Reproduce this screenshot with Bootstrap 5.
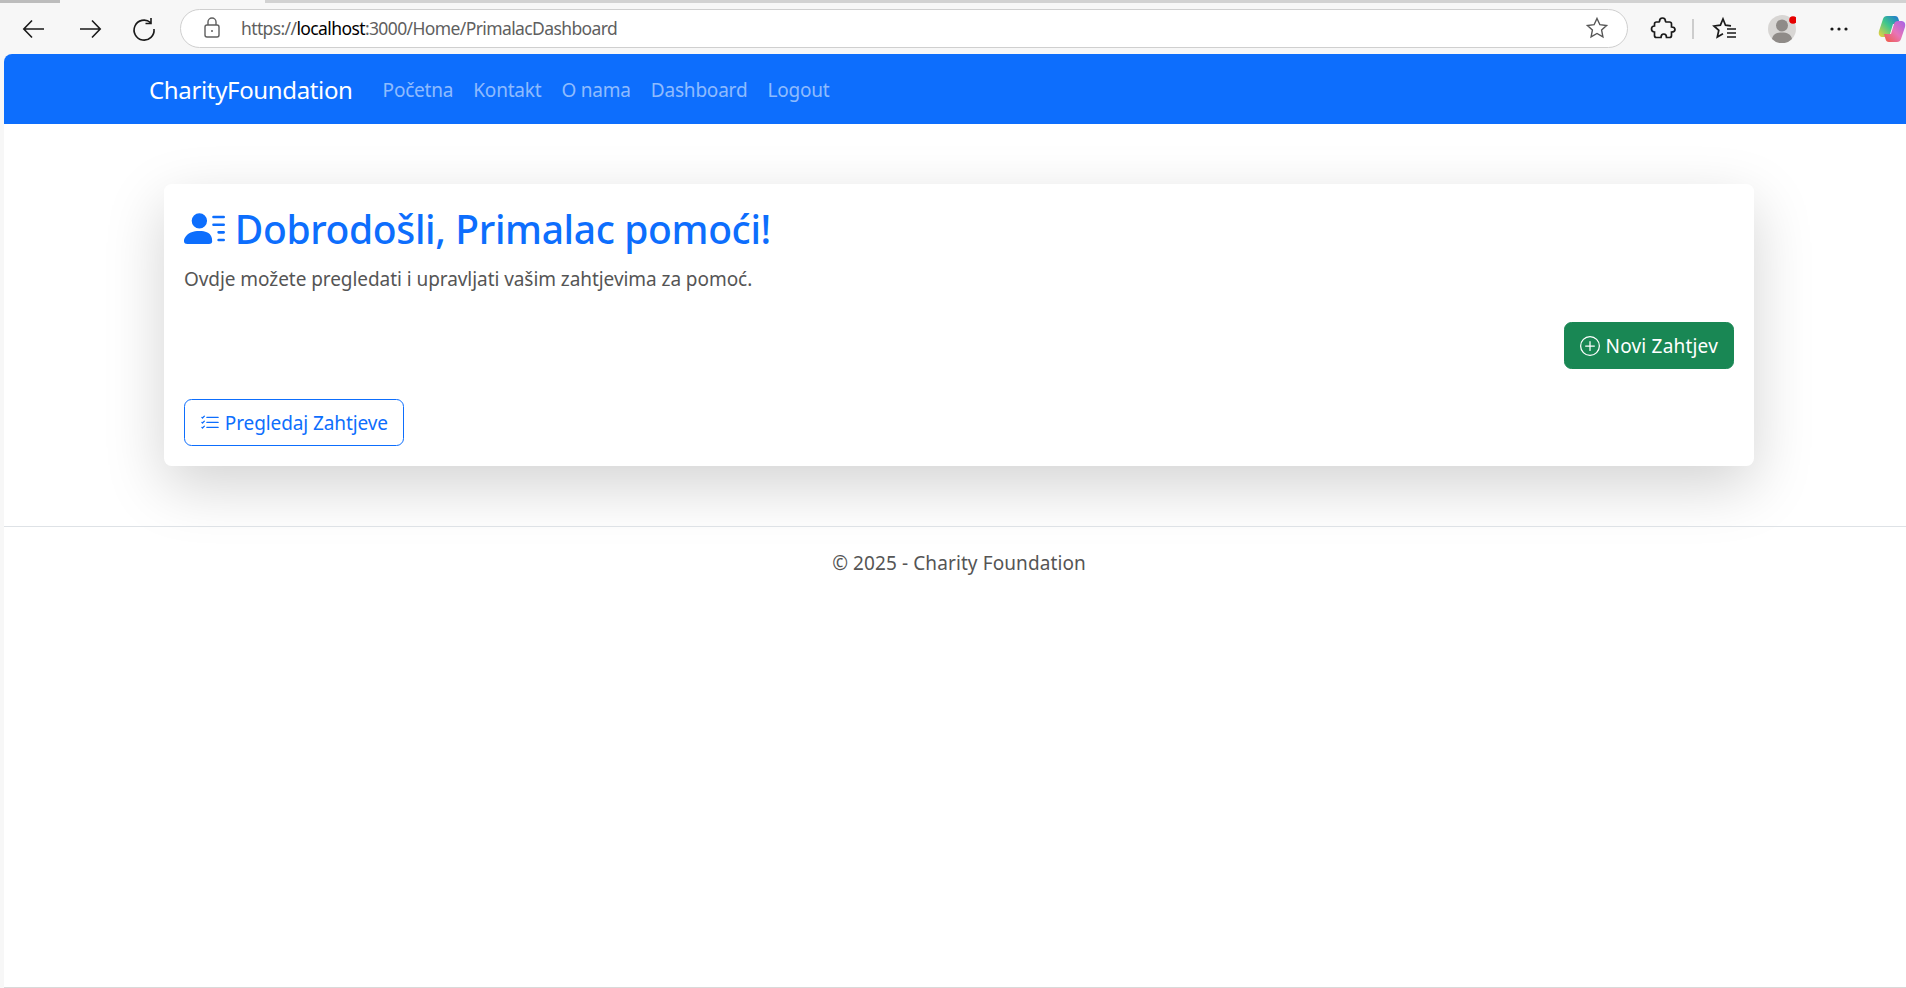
<!DOCTYPE html>
<html lang="bs">
<head>
<meta charset="utf-8">
<title>CharityFoundation</title>
<link href="https://cdn.jsdelivr.net/npm/bootstrap@5.3.0/dist/css/bootstrap.min.css" rel="stylesheet">
<style>
html{font-size:20px}
html,body{height:988px;overflow:hidden}
body{font-family:"Noto Sans","Open Sans",sans-serif;background:#f7f7f7;color:#212529;font-size:19px;letter-spacing:-.06px}
.tabstrip{height:3px;background:#d2d2d2}
.tabstrip .seg1{width:60px;background:#bdbdbd}
.tabstrip .seg2{width:205px;background:#f7f7f7}
.chromebar{height:51px;position:relative}
.tool{width:26px;height:26px;flex:none;color:#1a1a1a}
.t-back{margin-left:21px}
.t-fwd{margin-left:30px}
.t-rel{margin-left:28px}
.addr{margin-left:23px;margin-top:-1px;width:1448px;height:39px;background:#fff;border:1.5px solid #cfcfcf;border-radius:20px;font-size:17.5px;letter-spacing:-.61px;color:#5f5f5f;padding:0 18px 0 22px}
.addr b{font-weight:400;color:#000}
.t-ext{margin-left:22px}
.sep{width:1.5px;height:20px;background:#cdcdcd;margin:0 18px 0 16px}
.avatar{width:28px;height:28px;margin-left:30px;position:relative;flex:none}
.dots{margin-left:30px}
.copilot{margin-left:26px;flex:none;width:28px;height:28px}
.frame{margin-left:4px;width:1902px;height:934px;background:#fff;border-top-left-radius:8px;border-bottom:1px solid #d9d9d9;overflow:hidden}
.frame .navbar{height:70px;padding:0}
.wide{width:1650px;margin-left:130px;max-width:none}
.navbar-brand{font-size:24px;letter-spacing:-.35px;padding:1px 0 0;margin-right:20px}
.nav-link{color:rgba(255,255,255,.55)!important;letter-spacing:-.2px;padding-top:11px;padding-bottom:9px}
.panel{margin:60px 15px;padding:20px;background:#fff;border-radius:7.5px;box-shadow:0 20px 60px rgba(0,0,0,.175)}
.panel h1{font-size:39px;line-height:50px;margin:0 0 9px;font-weight:500;color:#0d6efd;letter-spacing:-.36px}
.panel h1 .ico{width:41px;height:41px;vertical-align:-5px}
.panel p{margin:0 0 29px;color:#555;line-height:30px;padding-top:1px;height:30px}
.ico{width:20px;height:20px;vertical-align:-3px;fill:currentColor}
.btn{font-size:19px;line-height:30px;border-width:1px}
.btn-success{letter-spacing:.2px}
.btn-outline-primary{letter-spacing:-.1px}
.actions-top{margin-bottom:30px}
.foot{border-top:1px solid #dee2e6;color:#555;padding:21px 0 19px;line-height:30px}
.foot-inner{width:1650px;margin-left:130px;letter-spacing:.1px}
</style>
</head>
<body>
<div class="tabstrip d-flex"><div class="seg1"></div><div class="seg2"></div></div>
<div class="chromebar d-flex align-items-center">
  <svg class="tool t-back" viewBox="0 0 26 26" fill="none" stroke="currentColor" stroke-width="1.6" aria-hidden="true"><path d="M23 13H3M11 4.500L2.800 13l8.200 8.500"/></svg>
  <svg class="tool t-fwd" viewBox="0 0 26 26" fill="none" stroke="currentColor" stroke-width="1.6" aria-hidden="true"><path d="M3 13h20M15 4.500l8.200 8.500-8.200 8.500"/></svg>
  <svg class="tool t-rel" viewBox="0 0 26 26" fill="none" stroke="currentColor" stroke-width="1.6" aria-hidden="true"><path d="M19.500 6.500A10 10 0 1 0 23 13M20 2v5.500h-5.500"/></svg>
  <div class="addr d-flex align-items-center">
    <svg width="18" height="22" viewBox="0 0 18 22" fill="none" stroke="#5f5f5f" stroke-width="1.4" class="me-3 flex-none" aria-hidden="true"><rect x="2" y="8" width="14" height="12" rx="2"/><path d="M5 8V5a4 4 0 0 1 8 0v3"/><circle cx="9" cy="14" r="1" fill="#5f5f5f" stroke="none"/></svg>
    <span class="flex-grow-1">https://<b>localhost</b>:3000/Home/PrimalacDashboard</span>
    <svg width="24" height="24" viewBox="0 0 24 24" fill="none" stroke="#555" stroke-width="1.4" aria-hidden="true"><path d="M12 2.500l2.900 6.200 6.700.8-5 4.600 1.300 6.700-5.900-3.300-5.900 3.300 1.300-6.700-5-4.600 6.700-.8z"/></svg>
  </div>
  <svg class="tool t-ext" viewBox="0 0 26 26" fill="none" stroke="currentColor" stroke-width="1.7" aria-hidden="true"><path d="M9.500 5.500C9.500 3 11 2 12.500 2s3 1 3 3.500c0 .7 2.500.5 4 .5 1.500 0 2 1 2 2v3c2.500 0 3.500 1 3.500 2.500S24 16 21.500 16v3.500c0 1.500-1 2-2 2h-3c0-2.500-1.200-3.500-2.700-3.500S11 19 11 21.500H6.500c-1.500 0-2-1-2-2V16C2.500 16 1.500 14.700 1.500 13S2.500 10 4.500 10V8c0-1.500 1-2 2-2 1 0 3 .2 3-.5z"/></svg>
  <div class="sep"></div>
  <svg class="tool" viewBox="0 0 26 26" fill="none" stroke="currentColor" stroke-width="1.7" aria-hidden="true"><path d="M19 9.800l-5.500-.6L11 3 8.400 9.200 2 10l4.800 4.300L5.300 21l5.700-3.200M15 13h9M15 17h9M15 21h9"/></svg>
  <svg class="avatar" viewBox="0 0 28 28" aria-hidden="true"><circle cx="14" cy="14" r="14" fill="#d8d6d4"/><circle cx="14" cy="10.500" r="6" fill="#8f8b88"/><path d="M4 24c1-5 5-6.500 10-6.500S23 19 24 24a14 14 0 0 1-20 0z" fill="#8f8b88"/><circle cx="25" cy="5" r="3.800" fill="#e60000"/></svg>
  <svg class="tool dots" viewBox="0 0 26 26" fill="currentColor" aria-hidden="true"><circle cx="6" cy="13" r="1.600"/><circle cx="13" cy="13" r="1.600"/><circle cx="20" cy="13" r="1.600"/></svg>
  <svg class="copilot" viewBox="0 0 28 28" aria-hidden="true"><defs><linearGradient id="cg1" x1="0" y1="1" x2="1" y2="0"><stop offset="0" stop-color="#f4d13c"/><stop offset=".5" stop-color="#3fc78c"/><stop offset="1" stop-color="#1b6fd8"/></linearGradient><linearGradient id="cg2" x1="0" y1="1" x2="1" y2="0"><stop offset="0" stop-color="#f0593e"/><stop offset=".5" stop-color="#e874b8"/><stop offset="1" stop-color="#a463e8"/></linearGradient></defs><path d="M9 1h8c2 0 3 1 3.500 3L22 9h-7L12 19c-.5 2-2 3-4 3H5c-3 0-5-2-4-6L5 4c.6-2 2-3 4-3z" fill="url(#cg1)"/><path d="M19 27h-8c-2 0-3-1-3.500-3L6 19h7l3-10c.5-2 2-3 4-3h3c3 0 5 2 4 6l-4 12c-.6 2-2 3-4 3z" fill="url(#cg2)"/></svg>
</div>
<div class="frame">
  <nav class="navbar navbar-expand navbar-dark bg-primary">
    <div class="wide container-fluid">
      <a class="navbar-brand" href="#">CharityFoundation</a>
      <ul class="navbar-nav me-auto">
        <li class="nav-item"><a class="nav-link" href="#">Početna</a></li>
        <li class="nav-item"><a class="nav-link" href="#">Kontakt</a></li>
        <li class="nav-item"><a class="nav-link" href="#">O nama</a></li>
        <li class="nav-item"><a class="nav-link" href="#">Dashboard</a></li>
        <li class="nav-item"><a class="nav-link" href="#">Logout</a></li>
      </ul>
    </div>
  </nav>
  <main class="wide container-fluid">
    <section class="panel">
      <h1><svg class="ico" viewBox="0 0 16 16" aria-hidden="true"><path d="M6 8a3 3 0 1 0 0-6 3 3 0 0 0 0 6zm-5 6s-1 0-1-1 1-4 6-4 5 3 5 4-1 1-1 1H1zM11 3.500a.5.5 0 0 1 .5-.5h4a.5.5 0 0 1 0 1h-4a.5.5 0 0 1-.5-.5zm.5 2.500a.5.5 0 0 0 0 1h4a.5.5 0 0 0 0-1h-4zm2 3a.5.5 0 0 0 0 1h2a.5.5 0 0 0 0-1h-2zm0 3a.5.5 0 0 0 0 1h2a.5.5 0 0 0 0-1h-2z"/></svg> Dobrodošli, Primalac pomoći!</h1>
      <p>Ovdje možete pregledati i upravljati vašim zahtjevima za pomoć.</p>
      <div class="actions-top d-flex justify-content-end">
        <a href="#" class="btn btn-success"><svg class="ico" viewBox="0 0 16 16" aria-hidden="true"><path d="M8 15A7 7 0 1 1 8 1a7 7 0 0 1 0 14zm0 1A8 8 0 1 0 8 0a8 8 0 0 0 0 16z"/><path d="M8 4a.5.5 0 0 1 .5.5v3h3a.5.5 0 0 1 0 1h-3v3a.5.5 0 0 1-1 0v-3h-3a.5.5 0 0 1 0-1h3v-3A.5.5 0 0 1 8 4z"/></svg> Novi Zahtjev</a>
      </div>
      <a href="#" class="btn btn-outline-primary"><svg class="ico" viewBox="0 0 16 16" aria-hidden="true"><path d="M5 11.500a.5.5 0 0 1 .5-.5h9a.5.5 0 0 1 0 1h-9a.5.5 0 0 1-.5-.5zm0-4a.5.5 0 0 1 .5-.5h9a.5.5 0 0 1 0 1h-9a.5.5 0 0 1-.5-.5zm0-4a.5.5 0 0 1 .5-.5h9a.5.5 0 0 1 0 1h-9a.5.5 0 0 1-.5-.5zM3.854 2.146a.5.5 0 0 1 0 .708l-1.500 1.500a.5.5 0 0 1-.708 0l-.5-.5a.5.5 0 1 1 .708-.708L2 3.293l1.146-1.147a.5.5 0 0 1 .708 0zm0 4a.5.5 0 0 1 0 .708l-1.500 1.500a.5.5 0 0 1-.708 0l-.5-.5a.5.5 0 1 1 .708-.708L2 7.293l1.146-1.147a.5.5 0 0 1 .708 0zm0 4a.5.5 0 0 1 0 .708l-1.500 1.500a.5.5 0 0 1-.708 0l-.5-.5a.5.5 0 0 1 .708-.708l.146.147 1.146-1.147a.5.5 0 0 1 .708 0z"/></svg> Pregledaj Zahtjeve</a>
    </section>
  </main>
  <footer class="foot"><div class="foot-inner text-center">© 2025 - Charity Foundation</div></footer>
</div>
<script src="https://cdn.jsdelivr.net/npm/bootstrap@5.3.0/dist/js/bootstrap.bundle.min.js"></script>
</body>
</html>
